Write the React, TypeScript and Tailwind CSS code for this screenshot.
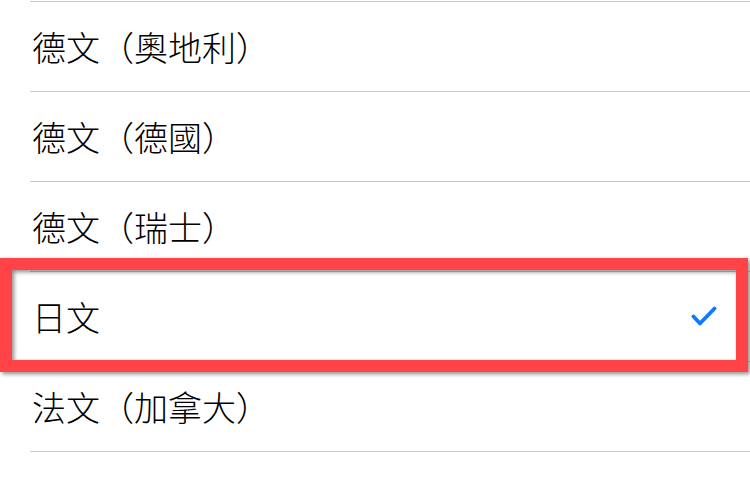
import React from "react";

const rows = [
    { name: "德文", region: "奧地利" },
    { name: "德文", region: "德國" },
    { name: "德文", region: "瑞士" },
    { name: "日文", selected: true },
    { name: "法文", region: "加拿大" },
    { name: "法文", region: "比利時" },
];

// SC punctuation sits at the side of its box, like the reference
const paren = "font-[family-name:'Noto_Sans_CJK_SC',sans-serif]";

function Check() {
    return (
        <svg width="26" height="22" viewBox="0 0 26 22" fill="none">
            <path d="M2.5 10.5L9 17.5L23.5 2.5" stroke="#0a7aff" strokeWidth="3.8" strokeLinecap="round" strokeLinejoin="round" />
        </svg>
    );
}

export default function App() {
    return (
        <div className="relative h-[480px] w-[750px] overflow-hidden bg-white font-[family-name:'Noto_Sans_CJK_TC','Noto_Sans_CJK_SC',sans-serif]">
            <div className="mt-px pl-[30px]">
                {rows.map((r, i) => (
                    <div key={i} className="flex h-[90px] items-center justify-between border-t border-[#c8c7cc] pl-[2px] pr-[33px]">
                        <span className="text-[34px] font-light leading-none text-black">
                            {r.name}
                            {r.region && (
                                <>
                                    <span className={paren}>（</span>
                                    {r.region}
                                    <span className={paren}>）</span>
                                </>
                            )}
                        </span>
                        {r.selected && <Check />}
                    </div>
                ))}
            </div>

            {/* highlight frame drawn over the selected row */}
            <div className="absolute left-0 top-[258px] h-[114px] w-[748px] border-[12px] border-[#ff4347] [filter:drop-shadow(2px_2px_2px_rgba(0,0,0,0.45))]" />
        </div>
    );
}
